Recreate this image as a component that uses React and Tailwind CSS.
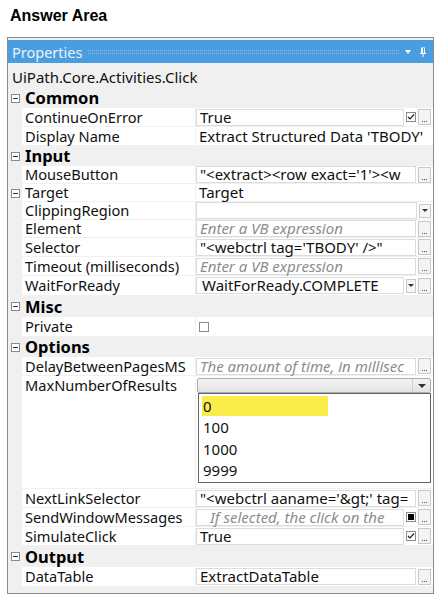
const FONT = { fontFamily: '"Noto Sans", "Open Sans", sans-serif' };

function Minus() {
  return (
    <div className="w-[9px] h-[9px] border border-[#8a8a8a] bg-white flex items-center justify-center">
      <div className="w-[5px] h-px bg-[#333]" />
    </div>
  );
}

function Dots() {
  return (
    <div className="w-[13px] h-[16px] border border-[#c8c8c8] bg-[#f4f4f4] flex items-end justify-center pb-[2px] shrink-0">
      <div className="flex gap-px">
        <div className="w-px h-px bg-[#555]" />
        <div className="w-px h-px bg-[#555]" />
        <div className="w-px h-px bg-[#555]" />
      </div>
    </div>
  );
}

function Arrow({ w = "w-[10px]" }) {
  return (
    <div className={`${w} h-[14px] border border-[#c8c8c8] bg-[#f6f6f6] flex items-center justify-center shrink-0`}>
      <div className="w-0 h-0 border-l-[3px] border-r-[3px] border-t-[3px] border-l-transparent border-r-transparent border-t-[#333]" />
    </div>
  );
}

function Check({ checked, filled }) {
  return (
    <div className="w-[10px] h-[10px] border border-[#8a8a8a] bg-white flex items-center justify-center shrink-0">
      {filled && <div className="w-[6px] h-[6px] bg-black" />}
      {checked && (
        <svg width="8" height="8" viewBox="0 0 8 8">
          <path d="M1 4 L3 6 L7 1.5" stroke="#222" strokeWidth="1.2" fill="none" />
        </svg>
      )}
    </div>
  );
}

function Box({ children, italic, className = "" }) {
  return (
    <div
      className={`flex-1 min-w-0 h-[17px] border border-[#dcdcdc] bg-white pl-[3px] text-[15px] leading-[15px] whitespace-nowrap overflow-x-clip overflow-y-visible ${
        italic ? "italic text-[#8c8c8c]" : "text-[#111]"
      } ${className}`}
    >
      {children}
    </div>
  );
}

function Header({ title, h = "h-[20px]" }) {
  return (
    <div className={`flex ${h} bg-[#f0f0f0] items-center`}>
      <div className="w-[14px] flex items-center justify-center pl-px">
        <Minus />
      </div>
      <div className="pl-[3px] text-[16.5px] font-bold text-black leading-[18px]">{title}</div>
    </div>
  );
}

function Row({ name, h = "h-[19px]", expand, children, tall }) {
  return (
    <div className={`flex ${h}`}>
      <div className="w-[14px] bg-[#f0f0f0] flex items-center justify-center pl-px">
        {expand && <Minus />}
      </div>
      <div className={`w-[173px] bg-white border-b border-[#f0f0f0] pl-[3px] flex ${tall ? "items-start pt-px" : "items-center"} text-[14.6px] leading-[17px] text-[#111] whitespace-nowrap`}>
        {name}
      </div>
      <div className="w-px bg-[#f0f0f0]" />
      <div className={`flex-1 min-w-0 bg-white border-b border-[#f0f0f0] flex ${tall ? "flex-col" : "items-center gap-[2px]"} pr-[2px]`}>
        {children}
      </div>
    </div>
  );
}

export default function App() {
  return (
    <div className="w-[438px] h-[596px] bg-white" style={FONT}>
      <div
        className="pl-[10px] pt-[4px] h-[37px] text-[16px] font-bold text-black"
        style={{ fontFamily: '"Liberation Sans", Arial, sans-serif' }}
      >
        Answer Area
      </div>
      <div className="ml-[7px] w-[427px] h-[557px] border border-[#8a8a8a] bg-[#f0f0f0] pt-[2px]">
        {/* title bar */}
        <div className="h-[23px] bg-[#4a9ee0] flex items-center pl-[4px] pr-[6px]">
          <span className="text-[14.5px] text-[#e8f2fb] leading-[18px]">Properties</span>
          <div className="flex-1 mx-[6px] h-[4px] border-y border-dotted border-[#8cc0ea]" />
          <div className="w-0 h-0 border-l-[3px] border-r-[3px] border-t-[4px] border-l-transparent border-r-transparent border-t-white mr-[8px]" />
          <svg width="8" height="10" viewBox="0 0 8 10">
            <path d="M2 0.5 H6 V6 H7 V7 H4.5 V10 H3.5 V7 H1 V6 H2 Z" fill="white" />
            <path d="M4.5 1 V6" stroke="#4a9ee0" strokeWidth="1" />
          </svg>
        </div>
        <div className="h-[25px] flex items-center pl-[4px] pt-[2px] text-[15px] leading-[20px] text-[#111]">
          UiPath.Core.Activities.Click
        </div>

        <Header title="Common" />
        <Row name="ContinueOnError">
          <Box>True</Box>
          <Check checked />
          <Dots />
        </Row>
        <Row name="Display Name">
          <div className="pl-[3px] text-[15px] leading-[17px] text-[#111] whitespace-nowrap">
            Extract Structured Data 'TBODY'
          </div>
        </Row>

        <Header title="Input" />
        <Row name="MouseButton" h="h-[18px]">
          <Box>"&lt;extract&gt;&lt;row exact='1'&gt;&lt;w</Box>
          <Dots />
        </Row>
        <Row name="Target" h="h-[18px]" expand>
          <div className="pl-[3px] text-[15px] leading-[17px] text-[#111]">Target</div>
        </Row>
        <Row name="ClippingRegion" h="h-[18px]">
          <Box />
          <Arrow w="w-[12px]" />
        </Row>
        <Row name="Element" h="h-[18px]">
          <Box italic>Enter a VB expression</Box>
          <Dots />
        </Row>
        <Row name="Selector">
          <Box>"&lt;webctrl tag='TBODY' /&gt;"</Box>
          <Dots />
        </Row>
        <Row name="Timeout (milliseconds)">
          <Box italic>Enter a VB expression</Box>
          <Dots />
        </Row>
        <Row name="WaitForReady" h="h-[20px]">
          <Box className="pl-[5px]">WaitForReady.COMPLETE</Box>
          <Arrow />
          <Dots />
        </Row>

        <Header title="Misc" h="h-[21px]" />
        <Row name="Private" h="h-[20px]">
          <div className="pl-[3px]">
            <Check />
          </div>
        </Row>

        <Header title="Options" />
        <Row name="DelayBetweenPagesMS">
          <Box italic>The amount of time, in millisec</Box>
          <Dots />
        </Row>
        <Row name="MaxNumberOfResults" h="h-[113px]" tall>
          <div className="mt-[2px] ml-px h-[15px] border border-[#acacac] rounded-[2px] bg-gradient-to-b from-[#f3f3f3] to-[#e4e4e4] flex justify-end">
            <div className="w-[18px] border-l border-[#cfcfcf] flex items-center justify-center">
              <div className="w-0 h-0 border-l-[4px] border-r-[4px] border-t-[4px] border-l-transparent border-r-transparent border-t-[#333]" />
            </div>
          </div>
          <div className="ml-[2px] h-[90px] border border-[#646464] bg-white pt-[2px] pl-[3px] text-[15px] text-[#111] leading-[22px]">
            <div className="w-[126px] h-[20px] bg-[#faec4a] pl-px leading-[20px]">0</div>
            <div className="pl-px">100</div>
            <div className="pl-px">1000</div>
            <div className="pl-px -mt-[1px]">9999</div>
          </div>
        </Row>
        <Row name="NextLinkSelector">
          <Box>"&lt;webctrl aaname='&amp;gt;' tag=</Box>
          <Dots />
        </Row>
        <Row name="SendWindowMessages">
          <Box italic className="pl-[13px]">If selected, the click on the</Box>
          <Check filled />
          <Dots />
        </Row>
        <Row name="SimulateClick">
          <Box>True</Box>
          <Check checked />
          <Dots />
        </Row>

        <Header title="Output" h="h-[21px]" />
        <Row name="DataTable" h="h-[20px]">
          <Box>ExtractDataTable</Box>
          <Dots />
        </Row>
      </div>
    </div>
  );
}
